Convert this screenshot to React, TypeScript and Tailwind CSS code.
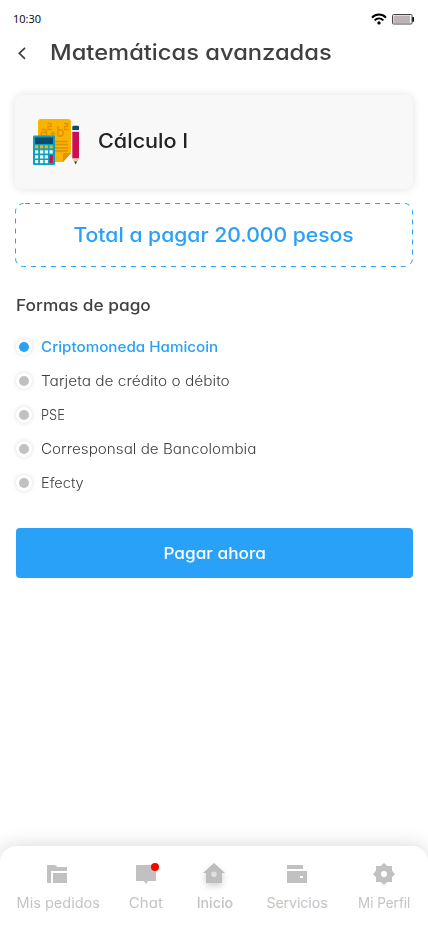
import React from "react";

const methods = [
  { label: "Criptomoneda Hamicoin", cls: "scale-x-[1.086]" },
  { label: "Tarjeta de crédito o débito", cls: "scale-x-[1.102]" },
  { label: "PSE", cls: "scale-x-[0.92]" },
  { label: "Corresponsal de Bancolombia", cls: "scale-x-[1.088]" },
  { label: "Efecty", cls: "scale-x-[1.04]" },
];

function StatusBar() {
  return (
    <div className="flex h-[38px] items-center justify-between pl-[13px] pr-[14px] font-['Open_Sans',sans-serif]">
      <span className="text-[11px] leading-[38px] text-black">10:30</span>
      <div className="flex items-center gap-[5px]">
        <svg width="16" height="12" viewBox="0 0 16 12" fill="none" stroke="#000" strokeWidth="2">
          <path d="M1 4.6C5 0.6 11 0.6 15 4.6" />
          <path d="M3.6 7.4C6.2 4.9 9.8 4.9 12.4 7.4" />
          <circle cx="8" cy="9.9" r="1.7" fill="#000" stroke="none" />
        </svg>
        <svg width="22" height="12" viewBox="0 0 22 12">
          <rect x="0.5" y="1.5" width="19.5" height="9.5" rx="1" fill="#fff" stroke="#444" />
          <rect x="1.5" y="2.5" width="16.5" height="7.5" fill="#bbb5b5" />
          <rect x="20.3" y="4" width="1.7" height="4.7" rx="0.5" fill="#000" />
        </svg>
      </div>
    </div>
  );
}

function MathIcon() {
  return (
    <svg width="48" height="48" viewBox="0 0 48 48" className="mb-[2px]">
      <path d="M8 2H35Q38 2 38 5V36L30 45H8Q5 45 5 42V5Q5 2 8 2Z" fill="#fbb300" />
      <path d="M38 36H32Q30 36 30 38V45Z" fill="#dc9300" />
      <g fill="none" stroke="#dc9300" strokeWidth="1.4">
        <path d="M8.5 12.5H12Q13.5 12.5 13.5 14V19H10Q8 19 8 17.3T10 15.5H13.5" />
        <path d="M14.5 6.5H18V9.5H15V12.5H19" />
        <path d="M17.5 16.5H22M19.7 14.2V18.8" />
        <path d="M25 9V19H28Q30 19 30 17V15Q30 13 28 13H25" />
        <path d="M31 6.5H34.5V9.5H31.5V12.5H35.5" />
        <path d="M21 24.5H35M21 27.5H35M21 31H35M21 34H35" />
      </g>
      <rect x="0" y="18.5" width="22" height="29.5" rx="1.2" fill="#0aa0c0" />
      <rect x="2" y="20.5" width="18" height="6.5" fill="#0c4a72" />
      {[2, 7, 11.7, 16.5].map((x) => (
        <rect key={x} x={x} y="28.3" width="3.2" height="3" fill="#fbb300" />
      ))}
      {[33.3, 38.3, 43].map((y) =>
        [2, 7, 11.7, 16.5].map((x) => (
          <rect key={x + "-" + y} x={x} y={y} width="3.2" height="3.2" fill="#f4fbff" />
        ))
      )}
      <rect x="16.3" y="38" width="3.6" height="8.3" fill="#cc0f52" />
      <path d="M39.3 13V10Q39.3 8.7 40.6 8.7H44.7Q46 8.7 46 10V13Z" fill="#0c4a72" />
      <rect x="39.3" y="13" width="6.7" height="1.8" fill="#e8eef2" />
      <rect x="39.3" y="14.8" width="6.7" height="26.7" fill="#cc0f52" />
      <path d="M39.3 41.5H46L43.6 46H41.7Z" fill="#f3c9a0" />
      <path d="M41.2 44.5H44.1L42.7 47.5Z" fill="#0c4a72" />
    </svg>
  );
}

function NavItem({ label, cls, textCls, children }: { label: string; cls: string; textCls: string; children: React.ReactNode }) {
  return (
    <div className={"flex flex-col items-center " + cls}>
      <div className="flex h-6 items-center justify-center">{children}</div>
      <span className={"mt-[7px] whitespace-nowrap text-[14px] leading-5 " + textCls}>{label}</span>
    </div>
  );
}

export default function App() {
  return (
    <div className="flex h-[926px] w-[428px] flex-col overflow-hidden bg-white font-['Inter',sans-serif] text-[#404040] [font-feature-settings:'cv11','ss03']">
      <StatusBar />
      <header className="flex h-[30px] items-center pl-[17px]">
        <svg width="10" height="14" viewBox="0 0 10 14" fill="none" stroke="#404040" strokeWidth="1.7">
          <path d="M8 1.8L2.3 7.3L8 12.8" />
        </svg>
        <h1 className="mb-[2px] ml-[23px] origin-left scale-x-[1.078] whitespace-nowrap text-[22px] font-medium leading-[30px]">Matemáticas avanzadas</h1>
      </header>

      <section className="ml-[15px] mt-[27px] flex h-[94px] w-[398px] shrink-0 items-center rounded-lg bg-[#f8f8f8] pl-[18px] shadow-[0_0_10px_rgba(0,0,0,0.12)]">
        <MathIcon />
        <span className="mb-[2px] ml-[17px] origin-left scale-x-[1.08] text-[20px] font-medium leading-[30px] text-[#222]">Cálculo I</span>
      </section>

      <section className="relative ml-[15px] mt-[14px] flex h-16 w-[398px] shrink-0 items-center justify-center">
        <svg className="absolute inset-0" width="398" height="64" fill="none">
          <rect x="0.5" y="0.5" width="397" height="63" rx="8" stroke="#2aa1f8" strokeDasharray="5 5" strokeDashoffset="-1.5" />
        </svg>
        <span className="scale-x-[1.057] whitespace-nowrap text-[20px] font-medium leading-[30px] text-[#2aa1f8]">Total a pagar 20.000 pesos</span>
      </section>

      <h2 className="ml-4 mt-[26px] w-fit origin-left scale-x-[1.08] whitespace-nowrap text-[16px] font-medium leading-6">Formas de pago</h2>

      <ul className="ml-4 mt-[13px] flex flex-col">
        {methods.map((m, i) => (
          <li key={m.label} className="flex h-[34px] items-center gap-[9px]">
            <span className="flex size-4 items-center justify-center rounded-full bg-white shadow-[0_0_5px_rgba(0,0,0,0.14)]">
              <span className={"size-[10px] rounded-full " + (i === 0 ? "bg-[#2aa1f8]" : "bg-[#c1c1c1]")} />
            </span>
            <span className={"origin-left whitespace-nowrap text-[14px] leading-5 " + m.cls + (i === 0 ? " font-medium text-[#2aa1f8]" : " font-light")}>{m.label}</span>
          </li>
        ))}
      </ul>

      <button className="ml-4 mt-7 flex h-[50px] w-[397px] shrink-0 items-center justify-center rounded bg-[#2aa1f8] text-[16px] font-medium text-white">
        <span className="scale-x-[1.075]">Pagar ahora</span>
      </button>

      <nav className="mt-auto flex h-20 w-full shrink-0 items-start rounded-t-2xl bg-white pt-4 text-[#c4c4c4] shadow-[0_0_20px_rgba(0,0,0,0.16)]">
        <NavItem label="Mis pedidos" cls="ml-[8px] w-[100px]" textCls="scale-x-[1.037]">
          <svg width="24" height="24" fill="#c1c1c1" className="mr-[2px]">
            <path d="M2.5 3H10L12.5 5H22V9H6V21H3Q2 21 2 20V3.5Q2 3 2.5 3ZM8 11H22V21H8Z" />
          </svg>
        </NavItem>
        <NavItem label="Chat" cls="w-[76px]" textCls="scale-x-[1.08]">
          <svg width="26" height="24" fill="#c1c1c1" className="overflow-visible">
            <path d="M3.5 3H22.5Q23 3 23 3.5V18.5Q23 19 22.5 19H15L13 22L11 19H3.5Q3 19 3 18.5V3.5Q3 3 3.5 3Z" />
            <circle cx="22" cy="5" r="4" fill="#f00" />
          </svg>
        </NavItem>
        <NavItem label="Inicio" cls="w-[62px]" textCls="font-medium scale-x-[1.02]">
          <svg width="24" height="24" fill="#bdbdbd" className="mr-[2px] overflow-visible drop-shadow-[0_3px_3px_rgba(0,0,0,0.18)]">
            <path fillRule="evenodd" d="M12 1L23 11H20V21H4V11H1ZM12 9.5A2.8 2.8 0 1 0 12 15.1A2.8 2.8 0 1 0 12 9.5Z" />
          </svg>
        </NavItem>
        <NavItem label="Servicios" cls="w-[102px]" textCls="">
          <svg width="24" height="24" fill="#c1c1c1">
            <path fillRule="evenodd" d="M2 3H18V7H2ZM2 9H22V21H2ZM15 14V16H18V14Z" />
          </svg>
        </NavItem>
        <NavItem label="Mi Perfil" cls="w-[72px]" textCls="scale-x-[0.96]">
          <svg width="24" height="24" fill="#c1c1c1">
            <path fillRule="evenodd" d="M12 1L15.2 4H20V8.8L23 12L20 15.2V20H15.2L12 23L8.8 20H4V15.2L1 12L4 8.8V4H8.8ZM12 9A3 3 0 1 0 12 15A3 3 0 1 0 12 9Z" />
          </svg>
        </NavItem>
      </nav>
    </div>
  );
}
